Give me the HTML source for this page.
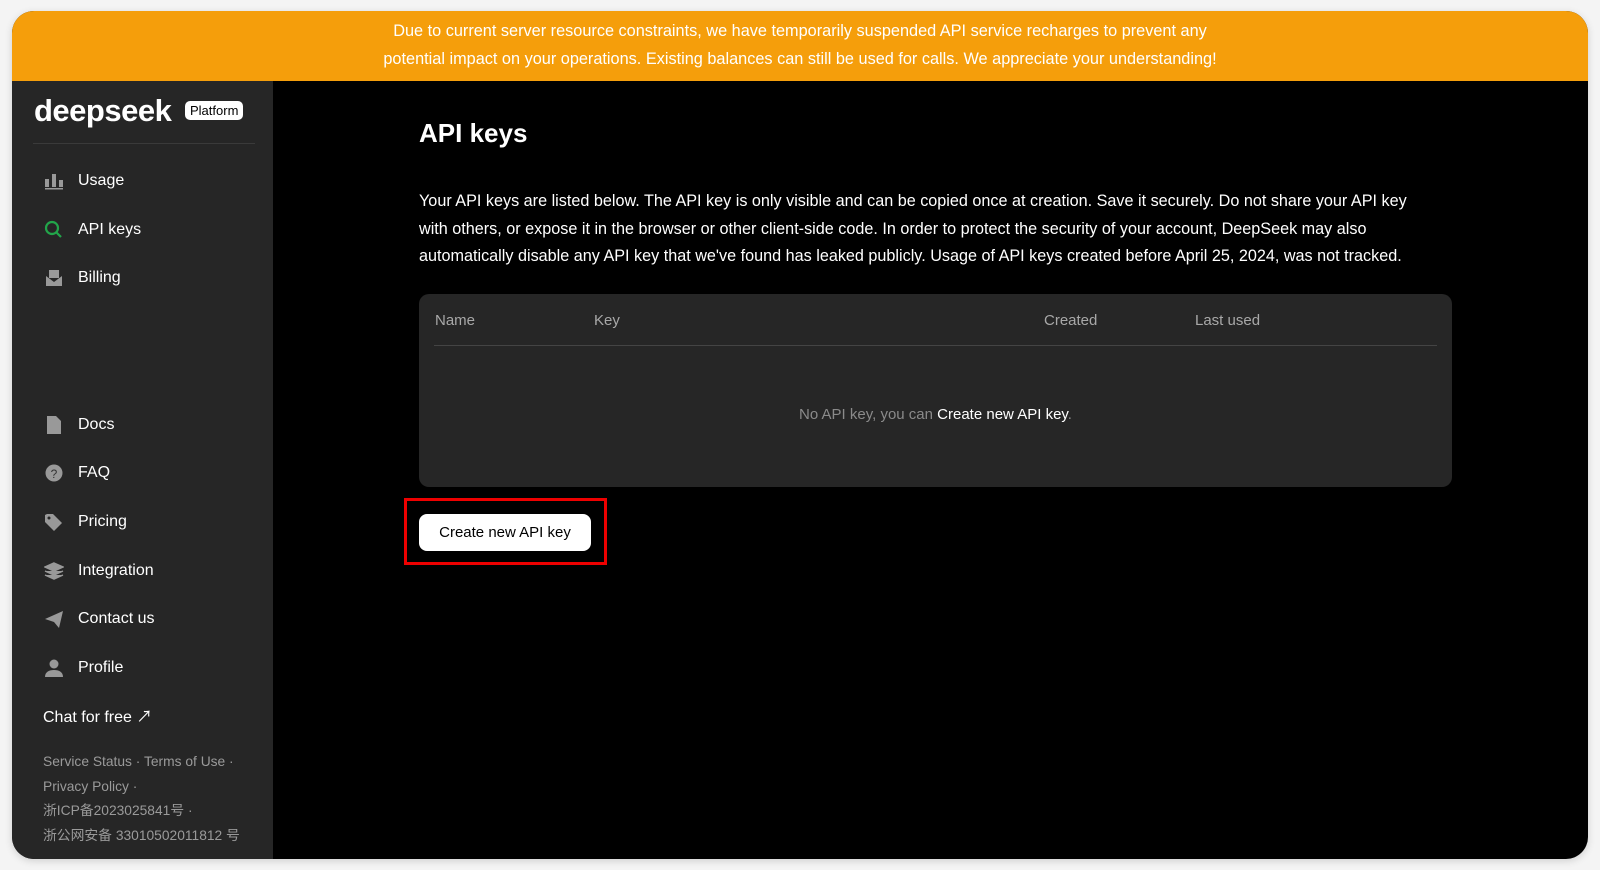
<!DOCTYPE html>
<html><head><meta charset="utf-8"><style>
*{box-sizing:border-box;margin:0;padding:0}
body{width:1600px;height:870px;background:#f4f4f4;font-family:"Liberation Sans","Noto Sans CJK SC",sans-serif;overflow:hidden;position:relative}
.card{position:absolute;left:12px;top:11px;width:1576px;height:848px;border-radius:22px;overflow:hidden;background:#000;box-shadow:0 2px 8px rgba(0,0,0,.15)}
.banner{position:absolute;left:0;top:0;width:100%;height:70px;background:#f59e0b;color:#fff;text-align:center;font-size:16.3px;line-height:27.5px;padding-top:7px}
.side{position:absolute;left:0;top:70px;width:261px;height:778px;background:#262626}
.logo{position:absolute;left:22px;top:12px;color:#fff;font-size:31px;font-weight:bold;letter-spacing:-0.5px}
.plat{position:absolute;left:173px;top:20px;background:#fff;color:#000;font-size:13px;border-radius:5px;padding:2px 5px}
.hr{position:absolute;left:21px;right:18px;top:62px;height:1px;background:#3a3a3a}
.item{position:absolute;left:32px;color:#fff;font-size:16px;display:flex;align-items:center;gap:14px}
.ic{width:20px;height:20px;display:flex;align-items:center;justify-content:center}
.foot{position:absolute;left:31px;color:#9a9a9a;font-size:13.8px;line-height:24.5px;top:669px}
.main{position:absolute;left:250px;top:70px;right:0;bottom:0}
h1{position:absolute;left:157px;top:37px;color:#fff;font-size:26px;font-weight:bold}
.p{position:absolute;left:157px;top:107px;width:1010px;color:#fff;font-size:16.2px;line-height:27.5px}
.tbl{position:absolute;left:157px;top:213px;width:1033px;height:193px;background:#262626;border-radius:10px}
.th{position:absolute;top:18px;color:#a8a8a8;font-size:15px}
.div{position:absolute;left:15px;right:15px;top:51px;height:1px;background:#444}
.empty{position:absolute;left:0;right:0;top:112px;text-align:center;color:#8a8a8a;font-size:15px}
.btn{position:absolute;left:157px;top:433px;width:172px;height:37px;background:#fff;border-radius:8px;color:#000;font-size:15px;display:flex;align-items:center;justify-content:center}
.red{position:absolute;left:142px;top:417px;width:203px;height:67px;border:3px solid #e00}
</style></head><body>
<div class="card">
<div class="banner">Due to current server resource constraints, we have temporarily suspended API service recharges to prevent any<br>potential impact on your operations. Existing balances can still be used for calls. We appreciate your understanding!</div>
<div class="side">
<div class="logo">deepseek</div><div class="plat">Platform</div>
<div class="hr"></div>
<div class="item" style="top:90px"><span class="ic"><svg width="20" height="18"><rect x="1" y="7" width="4" height="8" fill="#999"/><rect x="8" y="2" width="4" height="13" fill="#999"/><rect x="15" y="8" width="4" height="7" fill="#999"/><rect x="1" y="16" width="18" height="1.5" fill="#999"/></svg></span>Usage</div>
<div class="item" style="top:139px"><span class="ic"><svg width="20" height="20"><circle cx="8" cy="8" r="6" stroke="#22a54a" stroke-width="2.2" fill="none"/><path d="M12 12l5 5" stroke="#22a54a" stroke-width="2.2"/></svg></span>API keys</div>
<div class="item" style="top:187px"><span class="ic"><svg width="20" height="18"><path d="M2 7l8 6 8-6v10H2z" fill="#999"/><rect x="5" y="1" width="10" height="8" fill="#999"/></svg></span>Billing</div>
<div class="item" style="top:334px"><span class="ic"><svg width="18" height="20"><path d="M2 1h9l5 5v13H2z" fill="#999"/></svg></span>Docs</div>
<div class="item" style="top:382px"><span class="ic"><svg width="20" height="20"><circle cx="10" cy="10" r="8.5" fill="#999"/><text x="10" y="15" text-anchor="middle" font-size="12" fill="#333" font-family="Liberation Sans">?</text></svg></span>FAQ</div>
<div class="item" style="top:431px"><span class="ic"><svg width="20" height="20"><path d="M1 3v7l9 9 8-8-9-9H3z" fill="#999"/><circle cx="5" cy="6" r="1.5" fill="#262626"/></svg></span>Pricing</div>
<div class="item" style="top:480px"><span class="ic"><svg width="20" height="20"><path d="M10 2l9 4-9 4-9-4z M1 10l9 4 9-4 M1 14l9 4 9-4" fill="#999" stroke="#999" stroke-width="1.5"/></svg></span>Integration</div>
<div class="item" style="top:528px"><span class="ic"><svg width="20" height="20"><path d="M1 10L19 2l-4 17-5-6z" fill="#999"/></svg></span>Contact us</div>
<div class="item" style="top:577px"><span class="ic"><svg width="20" height="20"><circle cx="10" cy="6" r="4.5" fill="#999"/><path d="M1 19c0-5 4-7 9-7s9 2 9 7z" fill="#999"/></svg></span>Profile</div>
<div class="item" style="top:622px;left:31px">Chat for free ↗</div>
<div class="foot">Service Status · Terms of Use ·<br>Privacy Policy ·<br>浙ICP备2023025841号 ·<br>浙公网安备 33010502011812 号</div>
</div>
<div class="main">
<h1>API keys</h1>
<div class="p">Your API keys are listed below. The API key is only visible and can be copied once at creation. Save it securely. Do not share your API key with others, or expose it in the browser or other client-side code. In order to protect the security of your account, DeepSeek may also automatically disable any API key that we've found has leaked publicly. Usage of API keys created before April 25, 2024, was not tracked.</div>
<div class="tbl">
<div class="th" style="left:16px">Name</div><div class="th" style="left:175px">Key</div><div class="th" style="left:625px">Created</div><div class="th" style="left:776px">Last used</div>
<div class="div"></div>
<div class="empty">No API key, you can <span style="color:#fff">Create new API key</span>.</div>
</div>
<div class="red"></div>
<div class="btn">Create new API key</div>
</div>
</div>
</body></html>
